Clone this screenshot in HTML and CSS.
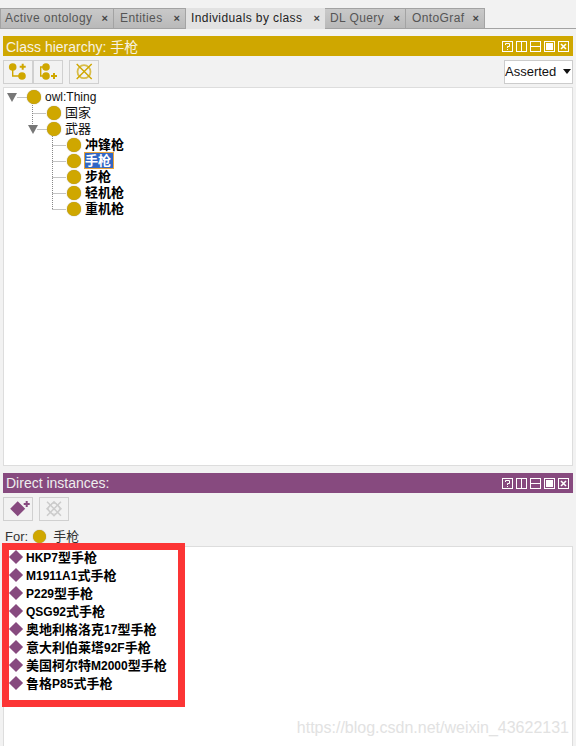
FILE: index.html
```html
<!DOCTYPE html>
<html lang="en">
<head>
  <meta charset="UTF-8">
  <title>Individuals by class</title>
  <link rel="stylesheet" href="styles.css">
</head>
<body>

  <!-- Tabs -->
  <div class="tabs">
    <div class="tab">Active ontology<span class="tab-close">×</span></div>
    <div class="tab">Entities<span class="tab-close">×</span></div>
    <div class="tab tab-active">Individuals by class<span class="tab-close">×</span></div>
    <div class="tab">DL Query<span class="tab-close">×</span></div>
    <div class="tab">OntoGraf<span class="tab-close">×</span></div>
  </div>

  <!-- Class hierarchy -->
  <div class="view view-class">
    <div class="view-head head-class">
      <span>Class hierarchy: 手枪</span>
      <div class="view-btns">
        <svg viewBox="0 0 11 11"><rect x=".5" y=".5" width="10" height="10" fill="none" stroke="#fff"/><path d="M3.500 4V2.500h4V5.500H5.500V7M5.500 8v1" fill="none" stroke="#fff"/></svg>
        <svg viewBox="0 0 11 11"><rect x=".5" y=".5" width="10" height="10" fill="none" stroke="#fff"/><path d="M5.500 1v9" stroke="#fff"/></svg>
        <svg viewBox="0 0 11 11"><rect x=".5" y=".5" width="10" height="10" fill="none" stroke="#fff"/><path d="M1 5.500h9" stroke="#fff"/></svg>
        <svg viewBox="0 0 11 11"><rect x=".5" y=".5" width="10" height="10" fill="none" stroke="#fff"/><rect x="2" y="2" width="7" height="7" fill="#fff"/></svg>
        <svg viewBox="0 0 11 11"><rect x=".5" y=".5" width="10" height="10" fill="none" stroke="#fff"/><path d="M3 3l5 5M8 3l-5 5" stroke="#fff" stroke-width="1.600"/></svg>
      </div>
    </div>
    <div class="toolbar">
      <button class="tool">
        <svg viewBox="0 0 24 20" width="24" height="20">
          <path d="M6.700 6v8H14" fill="none" stroke="#cfa700" stroke-width="1.400"/>
          <circle cx="6.700" cy="5" r="3.800" fill="#cfa700"/>
          <circle cx="16" cy="14" r="3.800" fill="#cfa700"/>
          <path d="M13.700 4.700h6M16.700 1.700v6" stroke="#cfa700" stroke-width="2"/>
        </svg>
      </button>
      <button class="tool">
        <svg viewBox="0 0 24 20" width="24" height="20">
          <path d="M8 5H4.700v9H8" fill="none" stroke="#cfa700" stroke-width="1.400"/>
          <circle cx="10" cy="5" r="3.800" fill="#cfa700"/>
          <circle cx="10" cy="14" r="3.800" fill="#cfa700"/>
          <path d="M15 14h6M18 11v6" stroke="#cfa700" stroke-width="2"/>
        </svg>
      </button>
      <button class="tool tool-gap">
        <svg viewBox="0 0 20 20" width="20" height="20">
          <circle cx="10" cy="9.700" r="6.500" fill="none" stroke="#d8bd4a" stroke-width="1.800"/>
          <path d="M2.700 2l15 15M17.700 2l-15 15" stroke="#cfa700" stroke-width="1.400"/>
        </svg>
      </button>
      <div class="select">Asserted<span class="select-arrow"></span></div>
    </div>
    <div class="tree">
      <!-- dotted connector lines sit over the tree -->
      <svg class="tree-lines" width="120" height="140">
        <g fill="none" stroke="#888" stroke-dasharray="1 1">
          <path d="M13.500 9.500h9"/>
          <path d="M28.500 15v22M28.500 25.500h14"/>
          <path d="M33.500 41.500h9"/>
          <path d="M48.500 46v75.500M48.500 57.500h14M48.500 73.500h14M48.500 89.500h14M48.500 105.500h14M48.500 121.500h14"/>
        </g>
      </svg>
      <div class="tree-row lvl0"><span class="twist"></span><span class="ball"></span><span class="node-plain">owl:Thing</span></div>
      <div class="tree-row lvl1"><span class="ball"></span><span class="node-plain">国家</span></div>
      <div class="tree-row lvl1b"><span class="twist"></span><span class="ball"></span><span class="node-plain">武器</span></div>
      <div class="tree-row lvl2"><span class="ball"></span><span class="node">冲锋枪</span></div>
      <div class="tree-row lvl2"><span class="ball"></span><span class="node node-sel">手枪</span></div>
      <div class="tree-row lvl2"><span class="ball"></span><span class="node">步枪</span></div>
      <div class="tree-row lvl2"><span class="ball"></span><span class="node">轻机枪</span></div>
      <div class="tree-row lvl2"><span class="ball"></span><span class="node">重机枪</span></div>
    </div>
  </div>

  <!-- Direct instances -->
  <div class="view view-inst">
    <div class="view-head head-inst">
      <span>Direct instances:</span>
      <div class="view-btns">
        <svg viewBox="0 0 11 11"><rect x=".5" y=".5" width="10" height="10" fill="none" stroke="#fff"/><path d="M3.500 4V2.500h4V5.500H5.500V7M5.500 8v1" fill="none" stroke="#fff"/></svg>
        <svg viewBox="0 0 11 11"><rect x=".5" y=".5" width="10" height="10" fill="none" stroke="#fff"/><path d="M5.500 1v9" stroke="#fff"/></svg>
        <svg viewBox="0 0 11 11"><rect x=".5" y=".5" width="10" height="10" fill="none" stroke="#fff"/><path d="M1 5.500h9" stroke="#fff"/></svg>
        <svg viewBox="0 0 11 11"><rect x=".5" y=".5" width="10" height="10" fill="none" stroke="#fff"/><rect x="2" y="2" width="7" height="7" fill="#fff"/></svg>
        <svg viewBox="0 0 11 11"><rect x=".5" y=".5" width="10" height="10" fill="none" stroke="#fff"/><path d="M3 3l5 5M8 3l-5 5" stroke="#fff" stroke-width="1.600"/></svg>
      </div>
    </div>
    <div class="toolbar toolbar-inst">
      <button class="tool">
        <svg viewBox="0 0 24 20" width="24" height="20">
          <path d="M11.700 2.200l7.500 7.500-7.500 7.500-7.500-7.500z" fill="#874a7f"/>
          <path d="M17.700 5h6M20.700 2v6" stroke="#874a7f" stroke-width="2"/>
        </svg>
      </button>
      <button class="tool tool-gap">
        <svg viewBox="0 0 20 20" width="20" height="20">
          <path d="M10 2.700l7 7-7 7-7-7z" fill="none" stroke="#ccc" stroke-width="1.500"/>
          <path d="M3 2.700l14 14M17 2.700l-14 14" stroke="#ccc" stroke-width="1.500"/>
          <circle cx="10" cy="9.700" r="5.500" fill="none" stroke="#ccc"/>
        </svg>
      </button>
    </div>
    <div class="for-row"><span>For:</span><span class="ball ball-for"></span><span class="for-name">手枪</span></div>
    <div class="inst-list">
      <div class="inst"><span class="diamond"></span><span class="inst-name"><span class="lat">HKP7</span>型手枪</span></div>
      <div class="inst"><span class="diamond"></span><span class="inst-name"><span class="lat">M1911A1</span>式手枪</span></div>
      <div class="inst"><span class="diamond"></span><span class="inst-name"><span class="lat">P229</span>型手枪</span></div>
      <div class="inst"><span class="diamond"></span><span class="inst-name"><span class="lat">QSG92</span>式手枪</span></div>
      <div class="inst"><span class="diamond"></span><span class="inst-name">奥地利格洛克<span class="lat">17</span>型手枪</span></div>
      <div class="inst"><span class="diamond"></span><span class="inst-name">意大利伯莱塔<span class="lat">92F</span>手枪</span></div>
      <div class="inst"><span class="diamond"></span><span class="inst-name">美国柯尔特<span class="lat">M2000</span>型手枪</span></div>
      <div class="inst"><span class="diamond"></span><span class="inst-name">鲁格<span class="lat">P85</span>式手枪</span></div>
      <div class="red-box"></div>
      <div class="watermark">https://blog.csdn.net/weixin_43622131</div>
    </div>
  </div>

</body>
</html>
```

FILE: styles.css
```css
html, body {
  height: 100%;
}

body {
  margin: 0;
  padding-top: 8px;
  box-sizing: border-box;
  height: 746px;
  overflow: hidden;
  display: flex;
  flex-direction: column;
  background-color: #f2f2f2;
  color: #333;
  font-family: "Liberation Sans", "Noto Sans CJK SC", sans-serif;
  font-size: 12px;
}

/* Tabs */
.tabs {
  display: flex;
  height: 21px;
  box-sizing: border-box;
  border-bottom: 1px solid #a3a3a3;
}

.tab {
  display: flex;
  align-items: center;
  justify-content: space-between;
  box-sizing: border-box;
  height: 21px;
  padding: 0 5px 1px 5px;
  border: 1px solid #a3a3a3;
  border-left-width: 0;
  background: linear-gradient(#c9c9c9, #b9b9b9);
  color: #555;
  letter-spacing: .4px;
}

.tab:first-child {
  border-left-width: 1px;
  padding-left: 4px;
  width: 114px;
}

.tab:nth-child(2) {
  width: 72px;
  padding-left: 6px;
}

.tab:nth-child(3) {
  width: 139px;
}

.tab:nth-child(4) {
  width: 81px;
}

.tab:nth-child(5) {
  width: 79px;
  padding-left: 6px;
}

.tab-active {
  background: #e2e2e2;
  border: 0;
  height: 21px;
  color: #222;
}

.tab-close {
  font-weight: bold;
  font-size: 11px;
  color: #444;
  letter-spacing: 0;
}

/* Views */
.view {
  margin: 7px 3px 0;
  display: flex;
  flex-direction: column;
}

.view-class {
  height: 430px;
}

.view-inst {
  flex: 1;
  min-height: 0;
}

.view-head {
  display: flex;
  justify-content: space-between;
  align-items: center;
  height: 20px;
  flex: none;
  padding: 0 4px 0 3px;
  color: #f8f3e4;
  font-size: 14px;
}

.head-class {
  background-color: #cfa700;
}

.head-inst {
  background-color: #874a7f;
  color: #eee;
}

.view-btns {
  display: flex;
  gap: 3px;
}

.view-btns svg {
  width: 11px;
  height: 11px;
}

.toolbar {
  display: flex;
  align-items: center;
  height: 24px;
  margin: 4px 0 3px;
  flex: none;
}

.tool {
  width: 30px;
  height: 24px;
  padding: 0;
  display: flex;
  align-items: center;
  justify-content: center;
  box-sizing: border-box;
  border: 1px solid #d0d0d0;
  background-color: #f2f2f2;
}

.tool-gap {
  margin-left: 6px;
}

.select {
  margin-left: auto;
  width: 69px;
  height: 24px;
  box-sizing: border-box;
  padding-bottom: 2px;
  display: flex;
  align-items: center;
  justify-content: space-between;
  background-color: #fff;
  border: 1px solid #ccc;
  color: #111;
  font-size: 13px;
}

.select-arrow {
  margin-right: 1px;
  border-left: 4px solid transparent;
  border-right: 4px solid transparent;
  border-top: 5px solid #111;
}

/* Tree */
.tree {
  position: relative;
  flex: 1;
  box-sizing: border-box;
  padding-top: 1px;
  background-color: #fff;
  border: 1px solid #ddd;
}

.tree-lines {
  position: absolute;
  left: 0;
  top: 0;
}

.tree-row {
  position: relative;
  display: flex;
  align-items: center;
  height: 16px;
  font-size: 13px;
  line-height: 15px;
}

.lvl0 {
  padding-left: 3px;
}

.lvl1 {
  padding-left: 43px;
}

.lvl1b {
  padding-left: 24px;
}

.lvl2 {
  padding-left: 63px;
}

.twist {
  flex: none;
  width: 0;
  height: 0;
  margin-right: 10px;
  border-left: 5px solid transparent;
  border-right: 5px solid transparent;
  border-top: 9px solid #777;
}

.lvl1b .twist {
  margin-right: 9px;
}

.ball {
  flex: none;
  width: 14px;
  height: 14px;
  border-radius: 50%;
  background-color: #cfa700;
  box-shadow: 0 0 1px #8a7a40;
}

.node-plain {
  margin: 0 0 1px 4px;
  color: #111;
}

.lvl0 .node-plain {
  margin-bottom: 0;
  font-size: 12px;
}

.node {
  margin: 0 0 1px 4px;
  color: #000;
  font-weight: bold;
}

.node-sel {
  padding-right: 2px;
  background-color: #3166c4;
  color: #fff;
  box-shadow: 0 0 0 1px #e8a33a;
}

/* Instances */
.toolbar-inst {
  margin-bottom: 5px;
}

.for-row {
  display: flex;
  align-items: center;
  height: 20px;
  flex: none;
  padding-left: 2px;
  font-size: 13px;
}

.for-name {
  margin-bottom: 2px;
}

.ball-for {
  width: 13px;
  height: 13px;
  margin: 0 7px 0 5px;
}

.inst-list {
  position: relative;
  flex: 1;
  box-sizing: border-box;
  padding-top: 2px;
  background-color: #fff;
  border: 1px solid #ddd;
  border-bottom: 0;
}

.inst {
  display: flex;
  align-items: center;
  height: 18px;
  padding-left: 5px;
  color: #000;
  font-size: 13px;
  font-weight: bold;
}

.inst-name {
  margin-bottom: 3px;
}

.lat {
  font-size: 12px;
}

.diamond {
  flex: none;
  width: 10px;
  height: 10px;
  margin: -3px 5.500px 0 1.500px;
  background-color: #874a7f;
  transform: rotate(45deg);
}

.red-box {
  position: absolute;
  left: -2px;
  top: -4px;
  width: 169px;
  height: 150px;
  border: 7px solid #fc3535;
}

.watermark {
  position: absolute;
  right: 3px;
  bottom: 9px;
  color: #e2e2e2;
  font-size: 16px;
  white-space: nowrap;
}
```
